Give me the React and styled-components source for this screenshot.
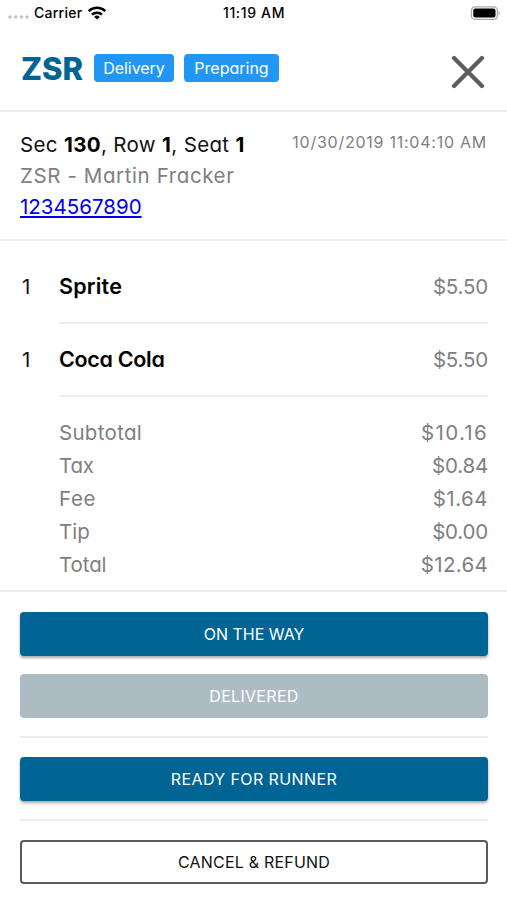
import React from 'react'
import styled, { createGlobalStyle } from 'styled-components'

const GlobalStyle = createGlobalStyle`
    * {
        box-sizing: border-box;
    }
    body {
        margin: 0;
        background: #fff;
        font-family: Inter, 'Liberation Sans', sans-serif;
        font-feature-settings: 'cv11';
        color: #111;
    }
`

const Screen = styled.main`
    width: 100%;
    height: 900px;
    display: flex;
    flex-direction: column;
    overflow: hidden;
    background: #fff;
`

const StatusBar = styled.div`
    height: 26px;
    display: grid;
    grid-template-columns: 1fr auto 1fr;
    align-items: center;
    padding: 0 7px 0 8px;
    font-size: 14px;
    font-weight: 500;
    font-feature-settings: normal;
    line-height: 26px;
    color: #000;
`

const Carrier = styled.div`
    display: flex;
    align-items: center;
    gap: 5px;
    letter-spacing: 0.25px;
`

const Clock = styled.span`
    letter-spacing: 0.65px;
`

const Battery = styled.div`
    display: flex;
    justify-content: flex-end;
`

const Header = styled.header`
    height: 86px;
    display: flex;
    align-items: center;
    padding: 0 20px 0 21px;
    border-bottom: 2px solid #ececec;
`

const Brand = styled.h1`
    margin: 2px 10px 0 0;
    width: 63px;
    font-size: 31px;
    font-weight: 800;
    line-height: 40px;
    letter-spacing: 0;
    color: #006494;
`

const Badge = styled.span`
    width: ${(props) => props.$width}px;
    height: 28px;
    margin-right: 10px;
    border-radius: 4px;
    background: #2196f3;
    color: #fff;
    font-size: 16px;
    font-weight: 400;
    line-height: 28px;
    text-align: center;
    letter-spacing: ${(props) => props.$track || 0}px;
`

const Close = styled.button`
    margin: 7px 0 0 auto;
    padding: 0;
    border: none;
    background: none;
    display: flex;
    cursor: pointer;
`

const Details = styled.section`
    height: 129px;
    display: flex;
    justify-content: space-between;
    padding: 17px 20px 0 20px;
    border-bottom: 2px solid #ececec;
`

const Line = styled.p`
    margin: 0;
    height: 31px;
    font-size: 20.5px;
    font-weight: 400;
    line-height: 32px;
    white-space: nowrap;
    letter-spacing: ${(props) => props.$track || 0}px;
    color: ${(props) => (props.$muted ? '#808080' : '#111')};
    b {
        font-weight: 700;
        color: #000;
    }
    a {
        color: #0000ee;
    }
`

const Time = styled.time`
    font-size: 16px;
    font-weight: 400;
    line-height: 27px;
    letter-spacing: 0.75px;
    white-space: nowrap;
    color: #808080;
`

const Order = styled.section`
    height: 351px;
    padding: 10px 19px 0 20px;
    border-bottom: 2px solid #ececec;
`

const Item = styled.div`
    display: flex;
    height: 73px;
    font-size: 20.5px;
    font-weight: 400;
    line-height: 71px;
`

const Count = styled.span`
    width: 39px;
    padding-left: 2px;
`

const ItemBody = styled.div`
    flex: 1;
    display: flex;
    justify-content: space-between;
    border-bottom: 2px solid #ececec;
`

const Name = styled.strong`
    font-size: 21.5px;
    font-weight: 600;
    color: #000;
    letter-spacing: ${(props) => props.$track || 0}px;
`

const Price = styled.span`
    color: #808080;
    letter-spacing: ${(props) => props.$track || 0}px;
`

const Totals = styled.div`
    padding: 19px 0 0 39px;
`

const TotalRow = styled.div`
    height: 33px;
    display: flex;
    justify-content: space-between;
    font-size: 20.5px;
    font-weight: 400;
    line-height: 33px;
    color: #808080;
`

const Label = styled.span`
    letter-spacing: ${(props) => props.$track || 0}px;
`

const Actions = styled.section`
    display: flex;
    flex-direction: column;
    padding: 20px 19px 0 20px;
`

const Btn = styled.button`
    height: 44px;
    padding: 0 0 1px;
    border: none;
    border-radius: 4px;
    background: #006494;
    color: #fff;
    cursor: pointer;
    font-family: inherit;
    font-size: 16px;
    font-weight: 400;
    letter-spacing: ${(props) => props.$track || 0}px;
    box-shadow: 0 2px 3px rgba(0, 0, 0, 0.35);
`

const DisabledBtn = styled(Btn)`
    margin-top: 18px;
    background: #adbcc2;
    box-shadow: none;
`

const OutlineBtn = styled(Btn)`
    border: 2px solid #5a5a5a;
    background: #fff;
    color: #111;
    box-shadow: none;
`

const Divider = styled.hr`
    width: 100%;
    height: 2px;
    margin: 18px 0 19px;
    border: none;
    background: #ececec;
`

const items = [
  { count: 1, name: 'Sprite', price: '$5.50', track: 0.2 },
  { count: 1, name: 'Coca Cola', price: '$5.50', track: -0.3 },
]

const totals = [
  { label: 'Subtotal', value: '$10.16', track: 0.3, valueTrack: 1.3 },
  { label: 'Tax', value: '$0.84', track: -0.2, valueTrack: -0.2 },
  { label: 'Fee', value: '$1.64', track: 0.6, valueTrack: 0.5 },
  { label: 'Tip', value: '$0.00', valueTrack: -0.2 },
  { label: 'Total', value: '$12.64', track: -0.1, valueTrack: 0.3 },
]

const Signal = styled.svg`
    margin-top: 8px;
`

function SignalDots() {
  return (
    <Signal width="21" height="6" viewBox="0 0 21 6" fill="#c4c4c4">
      <circle cx="2" cy="3" r="1.8" />
      <circle cx="7.7" cy="3" r="1.8" />
      <circle cx="13.4" cy="3" r="1.8" />
      <circle cx="19" cy="3" r="1.8" />
    </Signal>
  )
}

function WifiIcon() {
  return (
    <svg width="20" height="14" viewBox="0 0 20 14" fill="none" stroke="#000" strokeWidth="2.5">
      <path d="M1.7 5.2a11.8 11.8 0 0 1 16.6 0" />
      <path d="M5 8.7a7.1 7.1 0 0 1 10 0" />
      <path d="M10 13.6 7.2 10.9a4 4 0 0 1 5.6 0z" fill="#000" stroke="none" />
    </svg>
  )
}

function BatteryIcon() {
  return (
    <svg width="30" height="14" viewBox="0 0 30 14">
      <rect x="1.4" y="0.8" width="26" height="12.6" rx="3.6" fill="#fff" stroke="#aaa" strokeWidth="1.3" />
      <rect x="3.3" y="2.6" width="22.2" height="9" rx="2" fill="#000" />
      <path d="M28.6 5v4.2c1.6-.7 1.6-3.5 0-4.2z" fill="#aaa" />
    </svg>
  )
}

function App() {
  return (
    <>
      <GlobalStyle />
      <Screen>
        <StatusBar>
          <Carrier>
            <SignalDots />
            <span>Carrier</span>
            <WifiIcon />
          </Carrier>
          <Clock>11:19 AM</Clock>
          <Battery>
            <BatteryIcon />
          </Battery>
        </StatusBar>
        <Header>
          <Brand>ZSR</Brand>
          <Badge $width={80} $track={-0.05}>Delivery</Badge>
          <Badge $width={95}>Preparing</Badge>
          <Close aria-label="Close">
            <svg width="38" height="38" viewBox="0 0 38 38" stroke="#5c5c5c" strokeWidth="4.2">
              <path d="M5 5l28 28M33 5L5 33" strokeLinecap="round" />
            </svg>
          </Close>
        </Header>
        <Details>
          <div>
            <Line $track={0.35}>Sec <b>130</b>, Row <b>1</b>, Seat <b>1</b></Line>
            <Line $muted $track={0.6}>ZSR - Martin Fracker</Line>
            <Line><a href="tel:1234567890">1234567890</a></Line>
          </div>
          <Time>10/30/2019 11:04:10 AM</Time>
        </Details>
        <Order>
          {items.map((item) => (
            <Item key={item.name}>
              <Count>{item.count}</Count>
              <ItemBody>
                <Name $track={item.track}>{item.name}</Name>
                <Price $track={-0.2}>{item.price}</Price>
              </ItemBody>
            </Item>
          ))}
          <Totals>
            {totals.map((row) => (
              <TotalRow key={row.label}>
                <Label $track={row.track}>{row.label}</Label>
                <Price $track={row.valueTrack}>{row.value}</Price>
              </TotalRow>
            ))}
          </Totals>
        </Order>
        <Actions>
          <Btn>ON THE WAY</Btn>
          <DisabledBtn $track={0.3}>DELIVERED</DisabledBtn>
          <Divider />
          <Btn $track={0.4}>READY FOR RUNNER</Btn>
          <Divider />
          <OutlineBtn $track={0.2}>CANCEL &amp; REFUND</OutlineBtn>
        </Actions>
      </Screen>
    </>
  )
}

export default App
